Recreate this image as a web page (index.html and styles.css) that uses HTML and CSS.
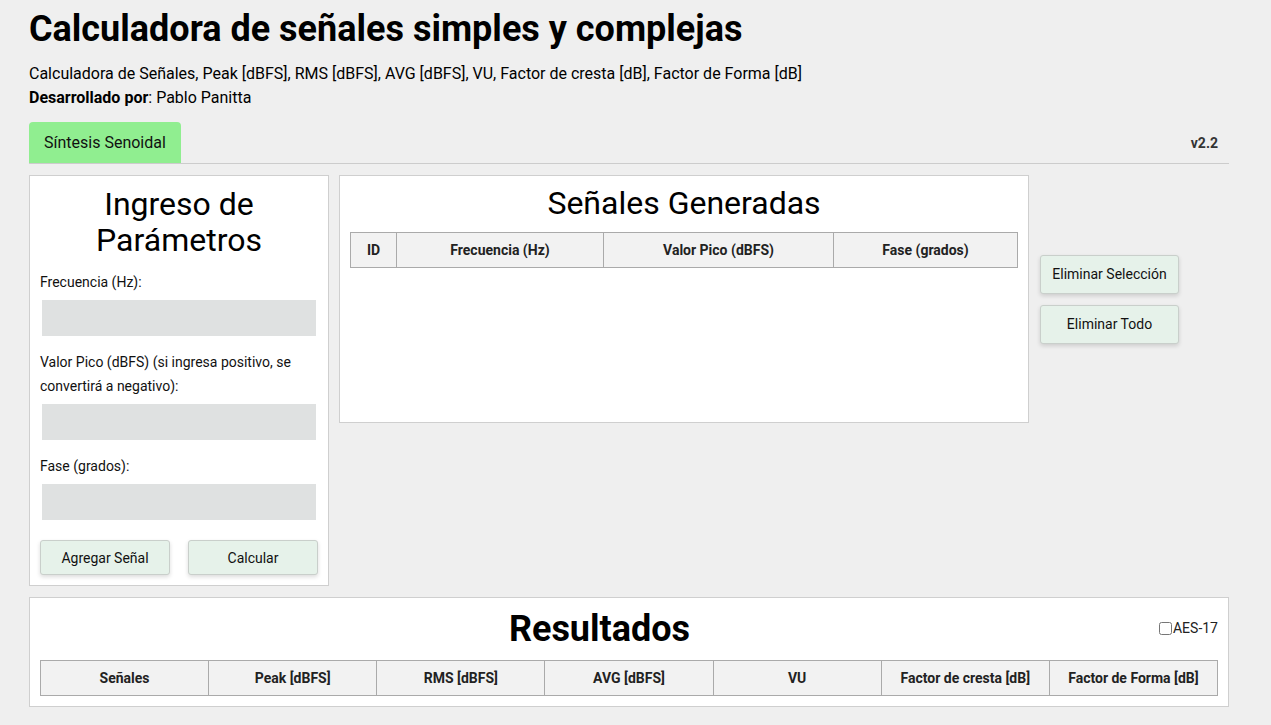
FILE: index.html
```html
<!DOCTYPE html>
<html lang="es">
<head>
<meta charset="utf-8">
<title>Calculadora de señales</title>
<link rel="stylesheet" href="styles.css">
</head>
<body>
<div class="page">
  <header class="header">
    <h1 class="title">Calculadora de señales simples y complejas</h1>
    <p class="subtitle">Calculadora de Señales, Peak [dBFS], RMS [dBFS], AVG [dBFS], VU, Factor de cresta [dB], Factor de Forma [dB]</p>
    <p class="author"><strong>Desarrollado por</strong>: Pablo Panitta</p>
  </header>

  <nav class="tabbar">
    <div class="tab">Síntesis Senoidal</div>
    <div class="version">v2.2</div>
  </nav>

  <main class="main">
    <section class="panel params">
      <h2 class="panel-title">Ingreso de Parámetros</h2>
      <label class="field-label">Frecuencia (Hz):</label>
      <input class="field" type="text">
      <label class="field-label">Valor Pico (dBFS) (si ingresa positivo, se convertirá a negativo):</label>
      <input class="field" type="text">
      <label class="field-label">Fase (grados):</label>
      <input class="field" type="text">
      <div class="actions">
        <button class="btn btn-form">Agregar Señal</button>
        <button class="btn btn-form">Calcular</button>
      </div>
    </section>

    <div class="signals-area">
      <section class="panel signals">
        <h2 class="panel-title">Señales Generadas</h2>
        <table class="grid-table">
          <thead>
            <tr>
              <th class="col-id">ID</th>
              <th class="col-freq">Frecuencia (Hz)</th>
              <th class="col-peak">Valor Pico (dBFS)</th>
              <th>Fase (grados)</th>
            </tr>
          </thead>
        </table>
      </section>
      <div class="side-actions">
        <button class="btn btn-side">Eliminar Selección</button>
        <button class="btn btn-side">Eliminar Todo</button>
      </div>
    </div>
  </main>

  <section class="panel results">
    <div class="results-head">
      <h2 class="results-title">Resultados</h2>
      <label class="aes"><input type="checkbox" class="aes-check">AES-17</label>
    </div>
    <table class="grid-table results-table">
      <thead>
        <tr>
          <th>Señales</th>
          <th>Peak [dBFS]</th>
          <th>RMS [dBFS]</th>
          <th>AVG [dBFS]</th>
          <th>VU</th>
          <th>Factor de cresta [dB]</th>
          <th>Factor de Forma [dB]</th>
        </tr>
      </thead>
    </table>
  </section>
</div>
</body>
</html>
```

FILE: styles.css
```css
* { box-sizing: border-box; }

html, body {
  margin: 0;
  padding: 0;
  background: #efefef;
  font-family: Roboto, "Liberation Sans", Arial, sans-serif;
  color: #000;
}

.page {
  width: 1200px;
  margin-left: 29px;
}

.header { padding-top: 8px; }

.title {
  margin: 0;
  font-size: 36px;
  line-height: 42px;
  font-weight: 700;
}

.subtitle, .author {
  margin: 0;
  font-size: 16px;
  line-height: 24px;
}
.subtitle { margin-top: 12px; }
.author strong { font-weight: 700; }

.tabbar {
  margin-top: 12px;
  display: flex;
  align-items: center;
  justify-content: space-between;
  border-bottom: 1px solid #cccccc;
}

.tab {
  background: #90ee90;
  height: 41px;
  padding: 0 15px;
  display: flex;
  align-items: center;
  font-size: 16px;
  border-radius: 4px 4px 0 0;
  color: #111;
}

.version {
  font-size: 14px;
  font-weight: 700;
  color: #333;
  padding-right: 11px;
}

.main {
  margin-top: 11px;
  display: flex;
  align-items: flex-start;
  gap: 10px;
}

.panel {
  background: #fff;
  border: 1px solid #cfcfcf;
  padding: 10px;
}

.panel-title {
  margin: 0;
  font-size: 32px;
  line-height: 36px;
  font-weight: 400;
  text-align: center;
}

.params {
  width: 300px;
  display: flex;
  flex-direction: column;
  padding-top: 10px;
}

.params .panel-title { margin-bottom: 12px; }

.field-label {
  display: block;
  font-size: 14px;
  line-height: 24px;
  color: #111;
}

.field {
  display: block;
  width: 274px;
  height: 36px;
  margin: 6px 0 14px 2px;
  border: none;
  background: #dfe1e1;
  font: inherit;
}

.actions {
  display: flex;
  justify-content: space-between;
  margin-top: 6px;
}

.btn {
  font-family: Roboto, "Liberation Sans", Arial, sans-serif;
  font-size: 14px;
  color: #111;
  background: #e6f2ea;
  border: 1px solid #c9cfcb;
  border-radius: 3px;
  box-shadow: 0 2px 4px rgba(0, 0, 0, 0.14);
  cursor: pointer;
}

.btn-form {
  width: 130px;
  height: 35px;
}

.signals-area {
  display: flex;
  align-items: center;
  gap: 11px;
}

.signals {
  width: 690px;
  height: 248px;
  padding-top: 9px;
}

.signals .panel-title { margin-bottom: 11px; }

.grid-table {
  width: 100%;
  border-collapse: collapse;
}

.grid-table th {
  background: #f2f2f2;
  border: 1px solid #aaaaaa;
  height: 35px;
  font-size: 14px;
  font-weight: 700;
  color: #222;
  padding: 0 8px;
  text-align: center;
}

.col-id { width: 46px; }
.col-freq { width: 207px; }
.col-peak { width: 230px; }

.side-actions {
  display: flex;
  flex-direction: column;
  gap: 11px;
}

.btn-side {
  width: 139px;
  height: 39px;
}

.results {
  margin-top: 11px;
  width: 1200px;
  padding-bottom: 10px;
}

.results-head {
  display: flex;
  align-items: center;
  margin-bottom: 10px;
}

.results-title {
  flex: 1;
  margin: 0;
  font-size: 36px;
  line-height: 42px;
  font-weight: 700;
  text-align: center;
}

.aes {
  display: flex;
  align-items: center;
  font-size: 14px;
  color: #222;
  margin-top: -2px;
}

.aes-check {
  margin: 0 1px 0 0;
  width: 13px;
  height: 13px;
}

.results-table { table-layout: fixed; }
```
